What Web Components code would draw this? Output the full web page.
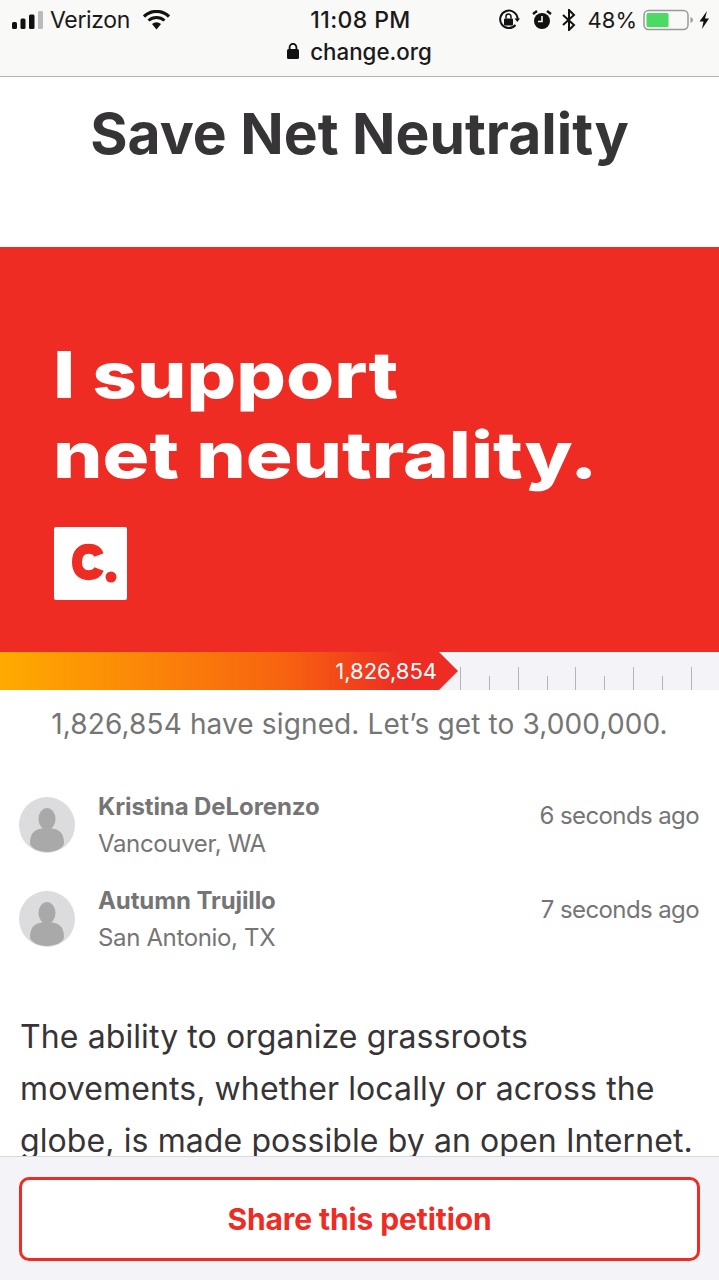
<!DOCTYPE html>
<html lang="en">
<head>
<meta charset="utf-8">
<title>Save Net Neutrality</title>
<style>
  html, body { margin: 0; padding: 0; background: #fff; }
  body { width: 719px; height: 1280px; overflow: hidden; position: relative; font-family: "Inter", "Liberation Sans", sans-serif; }
</style>
</head>
<body>
<status-bar></status-bar>
<petition-title>Save Net Neutrality</petition-title>
<hero-banner></hero-banner>
<progress-meter count="1,826,854"></progress-meter>
<signer-list>
  <signer-row name="Kristina DeLorenzo" place="Vancouver, WA" ago="6 seconds ago"></signer-row>
  <signer-row name="Autumn Trujillo" place="San Antonio, TX" ago="7 seconds ago"></signer-row>
</signer-list>
<petition-body>The ability to organize grassroots movements, whether locally or across the globe, is made possible by an open Internet.</petition-body>
<share-footer>Share this petition</share-footer>

<script>
class StatusBar extends HTMLElement {
    constructor() {
        super();
        this.attachShadow({ mode: 'open' });
        this.shadowRoot.innerHTML = `
        <style>
            :host {
                display: block;
                height: 76px;
                background: #f9f9f8;
                border-bottom: 1px solid #b4b4b4;
                font-family: "Inter", "Liberation Sans", sans-serif;
                color: #1a1a1a;
            }
            .top {
                display: grid;
                grid-template-columns: 1fr auto 1fr;
                align-items: center;
                height: 40px;
                padding: 0 8px 0 12px;
                font-size: 22px;
            }
            .left, .right { display: flex; align-items: center; }
            .right { justify-content: flex-end; }
            .carrier { margin-left: 7px; font-size: 23px; letter-spacing: -0.35px; }
            .time { font-weight: 500; font-size: 23px; letter-spacing: 0.4px; margin-left: -2px; }
            .url {
                display: flex;
                justify-content: center;
                align-items: center;
                gap: 11px;
                height: 24px;
                font-size: 22.3px;
                font-weight: 500;
                margin-top: -1px;
            }
            svg { display: block; flex: none; }
        </style>
        <div class="top">
            <div class="left">
                <svg width="31" height="18" viewBox="0 0 31 18">
                    <rect x="0" y="11" width="5" height="7" rx="1.5" fill="#111"/>
                    <rect x="8.5" y="7.5" width="5" height="10.5" rx="1.5" fill="#111"/>
                    <rect x="17" y="3.5" width="5.5" height="14.5" rx="1.5" fill="#111"/>
                    <rect x="26" y="0" width="5" height="18" rx="1" fill="#bbb"/>
                </svg>
                <span class="carrier">Verizon</span>
                <svg style="margin-left:13px" width="27" height="20" viewBox="0 0 27 20">
                    <path d="M1 6.5 A18 18 0 0 1 26 6.5" fill="none" stroke="#111" stroke-width="3.2"/>
                    <path d="M5.5 10.5 A12 12 0 0 1 21.5 10.5" fill="none" stroke="#111" stroke-width="3"/>
                    <path d="M9 14 L13.5 19.5 L18 14 A7 7 0 0 0 9 14 Z" fill="#111"/>
                </svg>
            </div>
            <div class="time">11:08 PM</div>
            <div class="right">
                <svg width="22" height="22" viewBox="0 0 22 22">
                    <path d="M17.5 16 A8.7 8.7 0 1 1 19.6 10" fill="none" stroke="#111" stroke-width="2"/>
                    <path d="M16.5 9.5 L22 9.5 L19.3 13 Z" fill="#111"/>
                    <rect x="6" y="9.5" width="9" height="7" rx="1" fill="#111"/>
                    <path d="M8 9.5 V7.5 A2.5 2.5 0 0 1 13 7.5 V9.5" fill="none" stroke="#111" stroke-width="1.5"/>
                </svg>
                <svg style="margin-left:12px" width="20" height="20" viewBox="0 0 20 20">
                    <circle cx="10" cy="11" r="8" fill="#111"/>
                    <path d="M10 6 V11.5 H6" fill="none" stroke="#f8f8f7" stroke-width="1.6"/>
                    <path d="M1 4 L5 1 M19 4 L15 1" stroke="#111" stroke-width="2.4"/>
                </svg>
                <svg style="margin-left:10px" width="14" height="22" viewBox="0 0 14 22">
                    <path d="M1 6 L12 16 L7 21 V1 L12 6 L1 16" fill="none" stroke="#111" stroke-width="2"/>
                </svg>
                <span style="margin-left:12px">48%</span>
                <svg style="margin-left:6px" width="68" height="22" viewBox="0 0 68 22">
                    <rect x="1" y="2" width="44" height="19" rx="4.5" fill="none" stroke="#999" stroke-width="1.5" transform="translate(0 -0.5)"/>
                    <rect x="3.5" y="4" width="22" height="14" rx="1.5" fill="#4cd964"/>
                    <path d="M47.5 8 Q50 9 50 11 Q50 13 47.5 14 Z" fill="#999"/>
                    <path d="M64 2 L56.5 12.5 H60.5 L59 20 L66 9.5 H62 Z" fill="#111"/>
                </svg>
            </div>
        </div>
        <div class="url">
            <svg width="12" height="16" viewBox="0 0 12 16">
                <rect x="0" y="6" width="12" height="10" rx="1.5" fill="#111"/>
                <path d="M2.6 6.5 V4.2 A3.4 3.4 0 0 1 9.4 4.2 V6.5" fill="none" stroke="#111" stroke-width="1.8"/>
            </svg>
            <span>change.org</span>
        </div>`;
    }
}

class PetitionTitle extends HTMLElement {
    constructor() {
        super();
        this.attachShadow({ mode: 'open' });
        this.shadowRoot.innerHTML = `
        <style>
            :host {
                display: block;
                height: 170px;
                padding-top: 22px;
                box-sizing: border-box;
                text-align: center;
                font-family: "Inter", "Liberation Sans", sans-serif;
                font-size: 57px;
                line-height: 70px;
                font-weight: 700;
                color: #363436;
            }
        </style>
        <slot></slot>`;
    }
}

class HeroBanner extends HTMLElement {
    constructor() {
        super();
        this.attachShadow({ mode: 'open' });
        this.shadowRoot.innerHTML = `
        <style>
            :host {
                display: block;
                height: 405px;
                box-sizing: border-box;
                padding: 88px 0 0 53px;
                background: #ee2c24;
                color: #fff;
                font-family: "Inter", "Liberation Sans", sans-serif;
            }
            .line {
                font-size: 64px;
                line-height: 80px;
                font-weight: 800;
                transform: scaleX(1.218);
                transform-origin: 0 0;
                width: 460px;
                white-space: nowrap;
            }
            .logo {
                width: 73px;
                height: 73px;
                margin: 32px 0 0 1px;
                border-radius: 2px;
            }
            .logo svg { display: block; }
        </style>
        <div class="line">I support</div>
        <div class="line">net neutrality.</div>
        <div class="logo">
            <svg width="73" height="73" viewBox="0 0 73 73">
                <rect width="73" height="73" rx="2" fill="#fff"/>
                <path d="M45 28 C43.5 24 40 21.8 34.5 21.8 C27 21.8 23 26.5 23 35 C23 43.5 27 48.2 34.5 48.2 C40 48.2 43.5 46 45 42" fill="none" stroke="#ee2c24" stroke-width="10"/>
                <circle cx="57" cy="50" r="5.5" fill="#ee2c24"/>
            </svg>
        </div>`;
    }
}

class ProgressMeter extends HTMLElement {
    constructor() {
        super();
        this.attachShadow({ mode: 'open' });
        const ticks = [];
        for (let i = 0; i < 9; i++) {
            ticks.push(`<i class="${i % 2 ? 'short' : 'tall'}"></i>`);
        }
        this.shadowRoot.innerHTML = `
        <style>
            :host {
                display: block;
                font-family: "Inter", "Liberation Sans", sans-serif;
            }
            .track {
                display: flex;
                height: 38px;
                background: #f4f3f7;
            }
            .fill {
                width: 458px;
                flex: none;
                box-sizing: border-box;
                padding-right: 21px;
                text-align: right;
                color: #fff;
                font-size: 22px;
                line-height: 39px;
                background: linear-gradient(90deg, #ffab00 0%, #f7630f 62%, #ee2c24 88%);
                clip-path: polygon(0 0, 439px 0, 458px 19px, 439px 38px, 0 38px);
            }
            .ticks {
                display: flex;
                align-items: flex-end;
                gap: 27.85px;
                padding-left: 2px;
            }
            .ticks i { display: block; width: 1px; background: #b5b5b5; }
            .tall { height: 23px; }
            .short { height: 14px; }
            .goal {
                text-align: center;
                color: #757575;
                font-size: 28px;
                line-height: 34px;
                padding-top: 17px;
                height: 51px;
                letter-spacing: 0.13px;
            }
        </style>
        <div class="track">
            <div class="fill">${this.getAttribute('count')}</div>
            <div class="ticks">${ticks.join('')}</div>
        </div>
        <div class="goal">1,826,854 have signed. Let’s get to 3,000,000.</div>`;
    }
}

class SignerList extends HTMLElement {
    constructor() {
        super();
        this.attachShadow({ mode: 'open' });
        this.shadowRoot.innerHTML = `
        <style>
            :host {
                display: flex;
                flex-direction: column;
                gap: 20px;
                padding: 30px 20px 0 19px;
                height: 253px;
                box-sizing: border-box;
            }
        </style>
        <slot></slot>`;
    }
}

class SignerRow extends HTMLElement {
    constructor() {
        super();
        this.attachShadow({ mode: 'open' });
        this.shadowRoot.innerHTML = `
        <style>
            :host {
                display: flex;
                height: 74px;
                font-family: "Inter", "Liberation Sans", sans-serif;
                color: #757575;
            }
            svg { display: block; flex: none; margin-top: 9px; }
            .who { margin-left: 23px; flex: 1; }
            .name { font-size: 24px; font-weight: 700; line-height: 37px; letter-spacing: -0.1px; }
            .place { font-size: 24px; line-height: 37px; letter-spacing: -0.35px; }
            .ago { font-size: 24px; line-height: 37px; padding-top: 9px; letter-spacing: -0.6px; }
        </style>
        <svg width="56" height="56" viewBox="0 0 56 56">
            <circle cx="28" cy="28" r="28" fill="#dcdbdd"/>
            <ellipse cx="28" cy="22" rx="8.5" ry="11" fill="#a9a9a9"/>
            <path d="M11 46 C11 36 16 31 28 31 C40 31 45 36 45 46 C45 51 36 55 28 55 C20 55 11 51 11 46 Z" fill="#a9a9a9"/>
        </svg>
        <div class="who">
            <div class="name">${this.getAttribute('name')}</div>
            <div class="place">${this.getAttribute('place')}</div>
        </div>
        <div class="ago">${this.getAttribute('ago')}</div>`;
    }
}

class PetitionBody extends HTMLElement {
    constructor() {
        super();
        this.attachShadow({ mode: 'open' });
        this.shadowRoot.innerHTML = `
        <style>
            :host {
                display: block;
                padding: 0 20px;
                font-family: "Inter", "Liberation Sans", sans-serif;
                font-size: 32px;
                line-height: 52px;
                color: #363436;
                letter-spacing: 0.1px;
            }
        </style>
        <slot></slot>`;
    }
}

class ShareFooter extends HTMLElement {
    constructor() {
        super();
        this.attachShadow({ mode: 'open' });
        this.shadowRoot.innerHTML = `
        <style>
            :host {
                display: block;
                position: absolute;
                left: 0;
                right: 0;
                bottom: 0;
                height: 124px;
                box-sizing: border-box;
                padding: 20px 19px 0 19px;
                background: #f4f3f7;
                border-top: 1px solid #d9d9d9;
                font-family: "Inter", "Liberation Sans", sans-serif;
            }
            .btn {
                height: 84px;
                box-sizing: border-box;
                border: 3px solid #ee2c24;
                border-radius: 10px;
                background: #fff;
                display: flex;
                align-items: center;
                justify-content: center;
                color: #ee2c24;
                font-size: 30px;
                letter-spacing: -0.1px;
                font-weight: 700;
            }
        </style>
        <div class="btn"><slot></slot></div>`;
    }
}

customElements.define('status-bar', StatusBar);
customElements.define('petition-title', PetitionTitle);
customElements.define('hero-banner', HeroBanner);
customElements.define('progress-meter', ProgressMeter);
customElements.define('signer-list', SignerList);
customElements.define('signer-row', SignerRow);
customElements.define('petition-body', PetitionBody);
customElements.define('share-footer', ShareFooter);
</script>
</body>
</html>
